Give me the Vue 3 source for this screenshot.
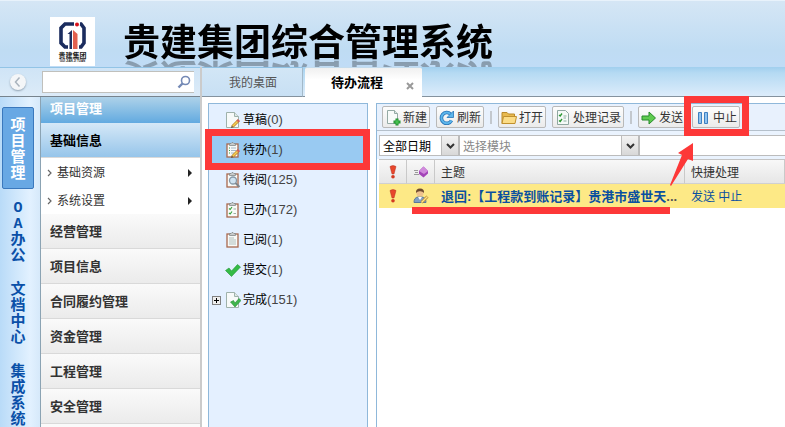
<script setup>
import { ref } from 'vue'

const keyword = ref('')
const dateRange = ref('all')
const moduleId = ref('')
const extra = ref('')
const currentFolder = ref('todo')

const systems = [
  { id: 'project', chars: ['项', '目', '管', '理'] },
  { id: 'oa', chars: ['O', 'A', '办', '公'] },
  { id: 'docs', chars: ['文', '档', '中', '心'] },
  { id: 'integration', chars: ['集', '成', '系', '统'] },
]
const subMenus = ['基础资源', '系统设置']
const menus = ['经营管理', '项目信息', '合同履约管理', '资金管理', '工程管理', '安全管理']

const folders = [
  { id: 'draft', name: '草稿', count: 0, icon: 'draft' },
  { id: 'todo', name: '待办', count: 1, icon: 'todo' },
  { id: 'toread', name: '待阅', count: 125, icon: 'toread' },
  { id: 'done', name: '已办', count: 172, icon: 'done' },
  { id: 'read', name: '已阅', count: 1, icon: 'read' },
  { id: 'submit', name: '提交', count: 1, icon: 'submit' },
  { id: 'finish', name: '完成', count: 151, icon: 'finish', expandable: true },
]
</script>

<template>
  <div class="page">
    <header class="banner">
      <svg class="logo" viewBox="0 0 45 49" width="45" height="49">
        <rect width="45" height="49" fill="#fff" />
        <path d="M24 7H15L11 11V26L15 30H18" fill="none" stroke="#1b2c5e" stroke-width="3.6" />
        <path d="M30 7H31L34 11V26L31 30H29" fill="none" stroke="#1b2c5e" stroke-width="3.6" />
        <path d="M17.500 17L22 13V32H19.500V17Z" fill="#1b2c5e" />
        <path d="M23 13L27.500 17V32H23Z" fill="#e2604f" />
        <circle cx="27" cy="7.500" r="2" fill="#d8121b" />
        <text x="22.500" y="40.500" text-anchor="middle" class="logo-name">贵建集团</text>
        <text x="22.500" y="45" text-anchor="middle" class="logo-sub">GUI JIAN JI TUAN</text>
      </svg>
      <h1 class="brand">贵建集团综合管理系统</h1>
    </header>

    <div class="body">
      <div class="left">
        <div class="search-row">
          <button class="collapse" aria-label="收起">
            <svg viewBox="0 0 16 16" width="16" height="16">
              <path d="M9.500 3.500L5.500 8L9.500 12.500" fill="none" stroke="#a9b3bd" stroke-width="1.500" />
            </svg>
          </button>
          <div class="search">
            <input v-model="keyword" type="text" aria-label="搜索" />
            <button class="search-btn" aria-label="搜索">
              <svg viewBox="0 0 14 14" width="14" height="14">
                <circle cx="8.500" cy="5.500" r="4" fill="#fff" stroke="#7489b5" stroke-width="1.600" />
                <path d="M5.500 8.500L1.500 12.500" stroke="#7489b5" stroke-width="2.400" />
              </svg>
            </button>
          </div>
        </div>
        <div class="nav">
          <nav class="rail">
            <button
              v-for="s in systems"
              :key="s.id"
              class="rail-item"
              :class="{ active: s.id === 'project' }"
            >
              <span v-for="c in s.chars" :key="c">{{ c }}</span>
            </button>
          </nav>
          <nav class="menu">
            <div class="menu-title">项目管理</div>
            <button class="menu-item open">基础信息</button>
            <button v-for="m in subMenus" :key="m" class="sub-item">
              <svg viewBox="0 0 6 8" width="6" height="8">
                <path d="M1 1L4 4L1 7" fill="none" stroke="#666" stroke-width="1.200" />
              </svg>
              <span>{{ m }}</span>
              <svg class="arrow" viewBox="0 0 4 8" width="4" height="8">
                <path d="M0 0L4 4L0 8Z" fill="#222" />
              </svg>
            </button>
            <button v-for="m in menus" :key="m" class="menu-item">{{ m }}</button>
            <div class="menu-rest"></div>
          </nav>
        </div>
      </div>

      <div class="splitter"></div>

      <div class="content">
        <div class="tabs">
          <button class="tab">我的桌面</button>
          <div class="tab active">
            <button class="tab-name">待办流程</button>
            <button class="tab-close" aria-label="关闭">
              <svg viewBox="0 0 8 8" width="8" height="8">
                <path d="M1 1L7 7M7 1L1 7" stroke="#999" stroke-width="2" />
              </svg>
            </button>
          </div>
        </div>

        <div class="panes">
          <ul class="tree">
            <li v-for="f in folders" :key="f.id" class="node" :class="{ selected: f.id === currentFolder }">
              <span class="toggle">
                <svg v-if="f.expandable" viewBox="0 0 9 9" width="9" height="9">
                  <rect x="0.500" y="0.500" width="8" height="8" fill="#eee" stroke="#808080" />
                  <path d="M2 4.500H7M4.500 2V7" stroke="#000" />
                </svg>
              </span>
              <button class="folder" @click="currentFolder = f.id">
                <svg viewBox="0 0 16 16" width="16" height="16">
                  <template v-if="f.icon === 'draft' || f.icon === 'finish'">
                    <path d="M1.500 0.500H9.500L13.500 4.500V15.500H1.500Z" fill="#f7faf9" stroke="#9fb2ab" />
                    <path d="M9.500 0.500V4.500H13.500" fill="#dfe8e6" stroke="#9fb2ab" />
                  </template>
                  <template v-else-if="f.icon !== 'submit'">
                    <rect x="2" y="2" width="11" height="13" fill="#f8faf8" stroke="#a8694e" stroke-width="1.300" />
                    <path d="M4.500 3.500V1.500H6L7 0.500H8L9 1.500H10.500V3.500Z" fill="#c7cbcb" stroke="#858b8b" stroke-width="0.800" />
                  </template>
                  <template v-if="f.icon === 'todo'">
                    <path d="M4 6H5M4 8.500H5M4 11H5" stroke="#3aa04a" />
                    <path d="M6 6H11M6 8.500H11M6 11H9" stroke="#a5b8c6" />
                  </template>
                  <path v-if="f.icon === 'read'" d="M4 6H9M4 8H11M4 10H11M4 12H11" stroke="#afbfbc" />
                  <template v-if="f.icon === 'toread'">
                    <circle cx="8" cy="8.500" r="3.500" fill="#cfe3f1" stroke="#8599a8" stroke-width="1.300" />
                    <path d="M10.500 11L14.500 15" stroke="#80868c" stroke-width="2" />
                  </template>
                  <template v-if="f.icon === 'done'">
                    <path d="M4 6.500L5.200 7.500L7 5M4 11L5.200 12L7 9.500" fill="none" stroke="#35a13c" stroke-width="1.200" />
                    <path d="M8.500 7H11M8.500 11.500H11" stroke="#9ab0a5" />
                  </template>
                  <template v-if="f.icon === 'draft' || f.icon === 'todo'">
                    <path d="M7.500 14.500L13.500 8.500" stroke="#b98328" stroke-width="3" />
                    <path d="M7.700 14.300L13.500 8.500" stroke="#f6cf55" stroke-width="1.600" />
                    <path d="M12.500 9.500L14 8" stroke="#d0605a" stroke-width="3" />
                    <path d="M6 16L6.700 13.500L8.500 15.300Z" fill="#6b5138" />
                  </template>
                  <path
                    v-if="f.icon === 'finish'"
                    d="M5.500 10L8.500 8.500L10 11L14 6.500L16 8.500L10 15Z"
                    fill="#3fb54c"
                    stroke="#278a34"
                    stroke-width="0.600"
                  />
                  <path
                    v-if="f.icon === 'submit'"
                    d="M0.500 8.500L4 6L6.500 9L12.500 2.500L15.500 5L6.500 14.500Z"
                    fill="#35bb46"
                    stroke="#249537"
                    stroke-width="0.600"
                  />
                </svg>
                <span>{{ f.name }}<span class="count">({{ f.count }})</span></span>
              </button>
              <span v-if="f.id === 'todo'" class="mark-frame"></span>
            </li>
          </ul>

          <main class="flow">
            <div class="toolbar">
              <button class="tool">
                <svg viewBox="0 0 16 16" width="16" height="16">
                  <path d="M2.500 0.500H9.500L12.500 3.500V13.500H2.500Z" fill="#f8fbfa" stroke="#94aaa5" />
                  <path d="M9.500 0.500V3.500H12.500" fill="#dce8e5" stroke="#94aaa5" />
                  <path d="M12 8.500V15.500M8.500 12H15.500" stroke="#1e8d2c" stroke-width="3" />
                  <path d="M12 9.500V14.500M9.500 12H14.500" stroke="#51ce59" stroke-width="1.200" />
                </svg>
                新建
              </button>
              <button class="tool">
                <svg viewBox="0 0 16 16" width="16" height="16">
                  <path d="M12.500 10.500A5.400 5.400 0 1 1 11.500 4" fill="none" stroke="#2774b8" stroke-width="3.600" />
                  <path d="M12.500 10.500A5.400 5.400 0 1 1 11.500 4" fill="none" stroke="#5cb6ec" stroke-width="2" />
                  <path d="M14.500 1V7.500H8Z" fill="#5cb6ec" stroke="#2774b8" stroke-width="0.800" />
                </svg>
                刷新
              </button>
              <span class="sep"></span>
              <button class="tool">
                <svg viewBox="0 0 16 16" width="16" height="16">
                  <path d="M1 13.500V2.500H6L7.500 4H13.500V6" fill="#e8b94e" stroke="#b98a2b" />
                  <path d="M1 13.500L2.500 6.500H15.500L14 13.500Z" fill="#fbdc86" stroke="#c0902e" />
                </svg>
                打开
              </button>
              <button class="tool">
                <svg viewBox="0 0 16 16" width="16" height="16">
                  <path d="M2.500 0.500H10.500L13.500 3.500V14.500H2.500Z" fill="#f5faf8" stroke="#8fa7a1" />
                  <path d="M4 5L5.200 6L7 3.500M4 10.500L5.200 11.500L7 9" fill="none" stroke="#29962f" stroke-width="1.300" />
                  <path d="M8.500 6H11.500M8.500 8H11M8.500 11H11.500" stroke="#8cae9f" />
                </svg>
                处理记录
              </button>
              <span class="sep"></span>
              <button class="tool">
                <svg viewBox="0 0 16 16" width="16" height="16">
                  <path d="M1 6H8V2L14.500 8L8 14V10H1Z" fill="#5ecb4f" stroke="#278a2a" />
                </svg>
                发送
              </button>
              <button class="tool stop">
                <svg viewBox="0 0 16 16" width="16" height="16">
                  <path d="M3.500 2.500H6.500V13.500H3.500ZM9.500 2.500H12.500V13.500H9.500Z" fill="#8fc3f0" stroke="#3f7fc0" />
                </svg>
                中止
                <span class="mark-frame stop-frame"></span>
                <svg class="mark-arrow" viewBox="0 0 26 46" width="26" height="46">
                  <path d="M24 2L24 20L19 18L2 45L1 44L13 14L9 12Z" fill="#fd3838" />
                </svg>
              </button>
            </div>

            <div class="filters">
              <label class="combo date">
                <select v-model="dateRange" aria-label="日期">
                  <option value="all">全部日期</option>
                </select>
                <span class="drop">
                  <svg viewBox="0 0 9 6" width="9" height="6">
                    <path d="M1 1L4.500 4.500L8 1" fill="none" stroke="#333" stroke-width="2" />
                  </svg>
                </span>
              </label>
              <label class="combo module">
                <select v-model="moduleId" aria-label="模块">
                  <option value="">选择模块</option>
                </select>
                <span class="drop">
                  <svg viewBox="0 0 9 6" width="9" height="6">
                    <path d="M1 1L4.500 4.500L8 1" fill="none" stroke="#333" stroke-width="2" />
                  </svg>
                </span>
              </label>
              <input v-model="extra" class="extra" type="text" aria-label="关键字" />
            </div>

            <table class="grid">
              <colgroup>
                <col class="c-icon" />
                <col class="c-icon" />
                <col />
                <col class="c-action" />
              </colgroup>
              <thead>
                <tr>
                  <th class="icon">
                    <svg viewBox="0 0 8 14" width="8" height="14">
                      <path d="M1 1.500Q4 -0.500 7 1.500L5 9H3Z" fill="#e8472c" stroke="#b53320" stroke-width="0.500" />
                      <circle cx="4" cy="11.800" r="1.800" fill="#d33a22" />
                    </svg>
                  </th>
                  <th class="icon">
                    <svg viewBox="0 0 14 12" width="14" height="12">
                      <path d="M0 4.500H4M1 6.500H4M0 8.500H5" stroke="#9a9a9a" />
                      <path d="M9.500 0.500L14 5V7.500L9.500 11.500L5 8V5Z" fill="#a344b8" />
                      <path d="M9.500 0.500L14 5L10 8L5 5Z" fill="#d08adc" />
                    </svg>
                  </th>
                  <th>主题</th>
                  <th>快捷处理</th>
                </tr>
              </thead>
              <tbody>
                <tr>
                  <td class="icon">
                    <svg viewBox="0 0 8 14" width="8" height="14">
                      <path d="M1 1.500Q4 -0.500 7 1.500L5 9H3Z" fill="#e8472c" stroke="#b53320" stroke-width="0.500" />
                      <circle cx="4" cy="11.800" r="1.800" fill="#d33a22" />
                    </svg>
                  </td>
                  <td class="icon">
                    <svg viewBox="0 0 16 16" width="16" height="16">
                      <path d="M1 14.500Q1 9.500 5 9H9Q13 9.500 13 14.500Z" fill="#7e9fc4" stroke="#5b7899" />
                      <path d="M5 9L7 12L9 9Z" fill="#fff" />
                      <circle cx="7" cy="5" r="3.600" fill="#efc28f" />
                      <path d="M3 5Q2.500 0.500 7 0.500Q11.500 0.500 11 5Q9.500 3 7 3.200Q4.500 3 3 5Z" fill="#6d4a2f" />
                      <path d="M8.500 14.500L14.500 8.500" stroke="#b98328" stroke-width="2.800" />
                      <path d="M8.500 14.500L14.500 8.500" stroke="#fbe38a" stroke-width="1.400" />
                    </svg>
                  </td>
                  <td class="subject">
                    <a href="#">退回:【工程款到账记录】贵港市盛世天<span class="dots">...</span></a>
                    <span class="mark-line"></span>
                  </td>
                  <td><a href="#">发送</a> <a href="#">中止</a></td>
                </tr>
              </tbody>
            </table>
          </main>
        </div>
      </div>
    </div>
  </div>
</template>

<style>
body {
  margin: 0;
  background: #fff;
}
</style>

<style scoped>
.page {
  display: flex;
  flex-direction: column;
  height: 100vh;
  overflow: hidden;
  font: 12px/16px "Liberation Sans", "Noto Sans CJK SC", sans-serif;
  color: #333;
}
.page *, .page *::before, .page *::after { box-sizing: border-box; }
button, input, select {
  margin: 0;
  padding: 0;
  border: none;
  background: none;
  font: inherit;
  color: inherit;
}
button { cursor: pointer; }
svg { display: block; flex: none; }
a { color: #0a50a0; text-decoration: none; }

.banner {
  flex: none;
  display: flex;
  height: 67px;
  padding-left: 50px;
  gap: 28px;
  overflow: hidden;
  border-top: 1px solid #e8f2fb;
  background: linear-gradient(#d5e6f5, #bfdcf3 75%, #c0dcf6);
}
.logo { margin-top: 16px; }
.logo-name { font-size: 7px; font-weight: 700; fill: #222; }
.logo-sub { font-size: 3px; font-weight: 700; fill: #222; }
.brand {
  margin: 25px 0 0;
  height: 36px;
  font-size: 37px;
  line-height: 36px;
  font-weight: 700;
  color: #000;
  white-space: nowrap;
  -webkit-box-reflect: below -4px linear-gradient(rgba(0, 0, 0, 0.2), rgba(0, 0, 0, 0.3));
}

.body {
  flex: 1;
  display: flex;
  min-height: 0;
}
.left {
  flex: none;
  display: flex;
  flex-direction: column;
  width: 200px;
}
.search-row {
  flex: none;
  display: flex;
  align-items: center;
  gap: 16px;
  height: 30px;
  padding: 0 6px 0 10px;
  border-top: 1px solid #92c4e6;
  border-bottom: 1px solid #77838d;
  background: linear-gradient(#cfe4f6, #dcebf8);
}
.collapse {
  flex: none;
  width: 16px;
  height: 16px;
  border-radius: 50%;
  background: #f4f6f8;
  box-shadow: 0 1px 2px #8fa0b0;
}
.search {
  flex: 1;
  display: flex;
  align-items: center;
  min-width: 0;
  height: 22px;
  padding-right: 3px;
  border: 1px solid #c0c0bc;
  border-right: none;
  background: #fff;
}
.search input {
  flex: 1;
  min-width: 0;
  padding: 0 4px;
  outline: none;
}

.nav {
  flex: 1;
  display: flex;
  min-height: 0;
}
.rail {
  flex: none;
  width: 41px;
  padding: 10px 6px 0 2px;
  border-right: 1px solid #8ba3b3;
  background: linear-gradient(90deg, #b9dbf8, #e2f1ff 75%, #d6e9fa);
}
.rail-item {
  display: flex;
  flex-direction: column;
  align-items: center;
  width: 32px;
  height: 82px;
  padding: 12px 0 6px;
  font-family: "Liberation Mono", "Noto Sans CJK SC", monospace;
  font-size: 15px;
  line-height: 16px;
  font-weight: 700;
  color: #0a50a8;
}
.rail-item.active {
  border: 1px solid #3a78bd;
  border-radius: 2px;
  padding: 11px 0 5px;
  background: #68a8e4;
  color: #fff;
}
.menu {
  flex: 1;
  display: flex;
  flex-direction: column;
}
.menu-title {
  flex: none;
  height: 26px;
  padding-left: 9px;
  font-size: 13px;
  line-height: 24px;
  font-weight: 700;
  color: #fff;
  background: linear-gradient(#aed2e9, #62aae0);
}
.menu-item {
  flex: none;
  height: 35px;
  padding: 1px 0 0 9px;
  border-bottom: 1px solid #d9d9d9;
  font-size: 13px;
  font-weight: 700;
  text-align: left;
  background: linear-gradient(#fafafa, #ebebeb);
}
.menu-item.open {
  color: #000;
  background: linear-gradient(#d5e8f7, #96c5ea);
}
.sub-item {
  flex: none;
  display: flex;
  align-items: center;
  gap: 4px;
  height: 28px;
  padding: 2px 8px 0 6px;
  background: #fff;
}
.sub-item .arrow { margin-left: auto; }
.menu-rest { flex: 1; background: #fafafa; }

.splitter {
  flex: none;
  width: 2px;
  background: #cbcbcb;
}

.content {
  flex: 1;
  display: flex;
  flex-direction: column;
  min-width: 0;
}
.tabs {
  flex: none;
  display: flex;
  gap: 2px;
  height: 30px;
  background: linear-gradient(#a0cfee, #b5daf3 20%, #deedfb);
  box-shadow: inset 0 -1px #84929e;
}
.tab {
  width: 101px;
  padding: 2px 0 0 2px;
  border-right: 1px solid #a3b9c9;
  border-top: 1px solid #8fc2e4;
  border-bottom: 1px solid #84929e;
  background: linear-gradient(#d2e6f6, #c8e0f4);
  color: #555;
}
.tab.active {
  display: flex;
  align-items: center;
  width: 117px;
  padding: 0 8px 0 26px;
  border: none;
  border-top: 1px solid #c4dced;
  border-radius: 2px 2px 0 0;
  background: linear-gradient(#f0f0f0, #fff 40%);
}
.tab-name {
  font-size: 13px;
  font-weight: 700;
  color: #000;
}
.tab-close {
  margin-left: auto;
  padding-top: 6px;
}

.panes {
  flex: 1;
  display: flex;
  gap: 8px;
  min-height: 0;
  padding: 6px 0 0 6px;
}
.tree {
  flex: none;
  width: 160px;
  margin: 0;
  padding: 0;
  list-style: none;
  border: 1px solid #8fb8da;
  border-bottom: none;
  background: #e4f0ff;
}
.node {
  position: relative;
  display: flex;
  align-items: center;
  height: 30px;
  padding: 2px 0 0 3px;
  color: #000;
}
.node.selected { background: #99caf2; }
.toggle {
  width: 13px;
  height: 9px;
}
.folder {
  display: flex;
  align-items: center;
  gap: 2px;
}
.count { font-size: 13px; color: #444; }

.mark-frame {
  position: absolute;
  inset: -5px -3px -6px -4px;
  z-index: 2;
  border: 7px solid #fd3838;
  pointer-events: none;
}

.flow {
  flex: 1;
  min-width: 0;
  border-top: 1px solid #8fb8da;
  border-left: 1px solid #8fb8da;
}
.toolbar {
  display: flex;
  align-items: center;
  gap: 6px;
  height: 27px;
  padding-left: 5px;
  border-bottom: 1px solid #b5c0cb;
  background: #e8f1fd;
}
.tool {
  flex: none;
  display: flex;
  align-items: center;
  gap: 2px;
  height: 22px;
  padding: 2px 2px 0;
  border: 1px solid #b9b9b9;
  border-radius: 2px;
  background: linear-gradient(#fdfdfd, #ebebeb);
  white-space: nowrap;
}
.sep {
  flex: none;
  width: 2px;
  height: 13px;
  background: #c3c8ce;
}
.stop { position: relative; }
.stop-frame { inset: -11px -10px -9px -9px; }
.mark-arrow {
  position: absolute;
  left: -24px;
  top: 34px;
  z-index: 2;
  pointer-events: none;
}

.filters {
  display: flex;
  height: 28px;
  padding: 4px 0 3px 2px;
  background: #eaf3fe;
}
.combo {
  flex: none;
  display: flex;
  border: 1px solid #bcbcbc;
  background: #fff;
}
.combo.date { width: 80px; color: #000; }
.combo.module { width: 180px; color: #888; }
.combo select {
  flex: 1;
  min-width: 0;
  padding: 2px 0 0 3px;
  appearance: none;
  outline: none;
}
.drop {
  display: flex;
  align-items: center;
  justify-content: center;
  width: 17px;
  border-left: 1px solid #bcbcbc;
  background: linear-gradient(#f3f3f3, #d8d8d8);
}
.extra {
  flex: 1;
  min-width: 0;
  padding: 0 4px;
  border: 1px solid #bcbcbc;
  border-right: none;
  background: #fff;
}

.grid {
  width: calc(100% - 2px);
  margin-left: 2px;
  table-layout: fixed;
  border-collapse: separate;
  border-spacing: 0;
}
.c-icon { width: 28px; }
.c-action { width: 100px; }
.grid th {
  height: 25px;
  padding: 2px 6px 0;
  border-top: 1px solid #c4c4c4;
  border-right: 1px solid #c9c9c9;
  border-bottom: 1px solid #d0d0d0;
  background: linear-gradient(#f8f8f8, #e6e6e6);
  font-weight: 400;
  text-align: left;
}
.grid td {
  height: 24px;
  padding: 2px 6px 0;
  background: #fde986;
  white-space: nowrap;
}
.grid .icon { padding: 0; }
.grid .icon svg { margin: 0 auto; }
.grid .subject {
  position: relative;
  font-size: 13px;
  font-weight: 700;
}
.dots { color: #555; }
.mark-line {
  position: absolute;
  left: -23px;
  right: 15px;
  bottom: -6px;
  height: 7px;
  background: #fd3838;
}
</style>
